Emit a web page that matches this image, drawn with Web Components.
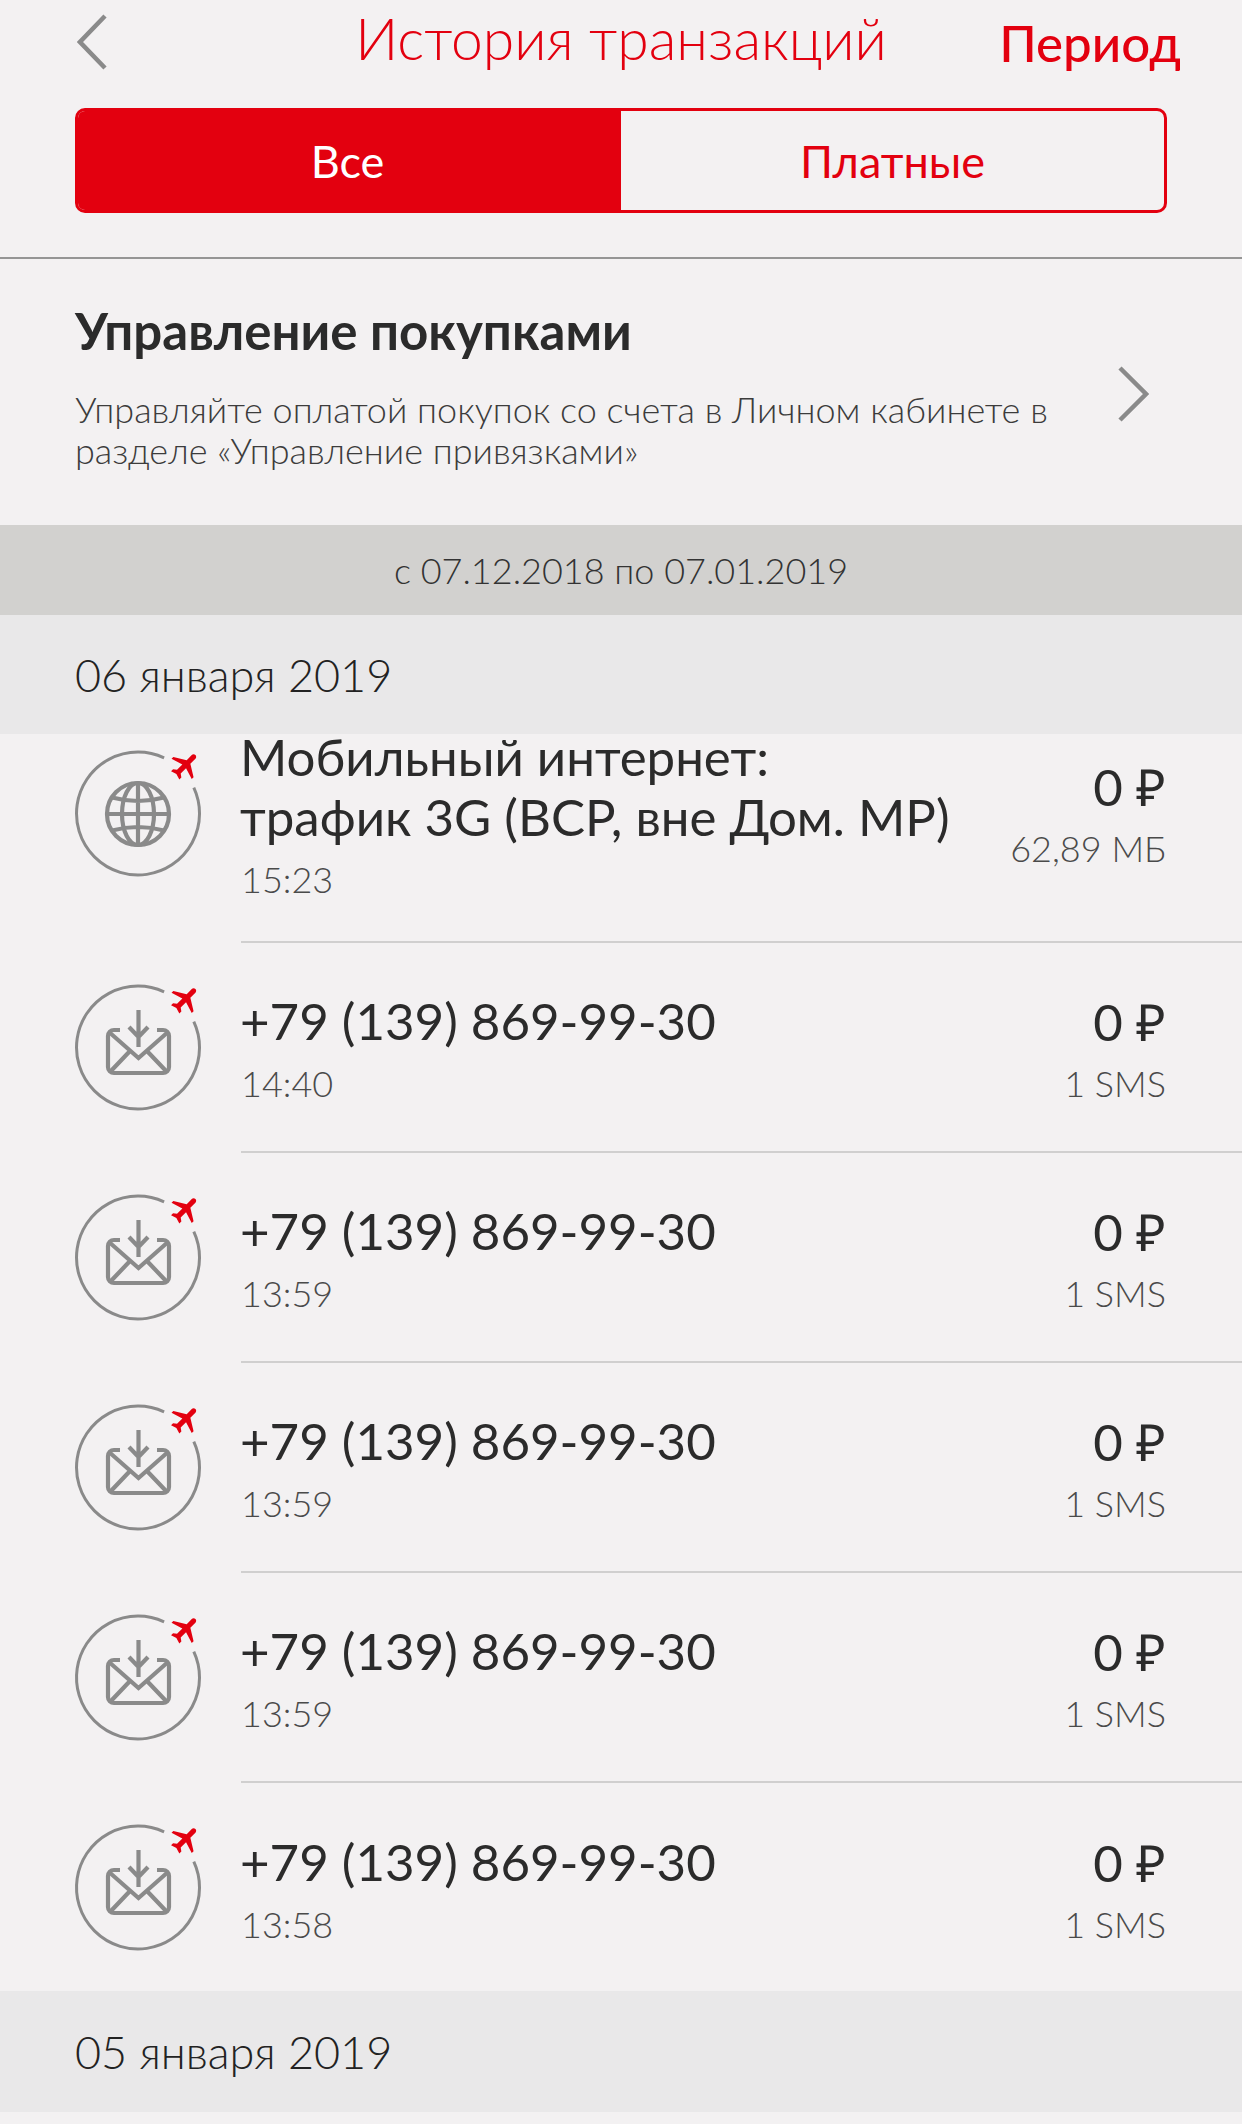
<!DOCTYPE html>
<html lang="ru"><head><meta charset="utf-8"><style>
html,body{margin:0;background:#f3f1f2}
body{width:1242px;height:2124px;overflow:hidden;font-family:Lato,"Open Sans","Noto Sans",sans-serif;color:#2b2b2b}
</style></head><body>
<tx-header></tx-header>
<tx-promo></tx-promo>
<tx-period>с 07.12.2018 по 07.01.2019</tx-period>
<tx-date>06 января 2019</tx-date>
<tx-list>
<tx-row kind="net" class="first" amount="0 ₽" sub="62,89 МБ" time="15:23">Мобильный интернет:<br>трафик 3G (ВСР, вне Дом. МР)</tx-row>
<tx-row amount="0 ₽" sub="1 SMS" time="14:40">+79 (139) 869-99-30</tx-row>
<tx-row amount="0 ₽" sub="1 SMS" time="13:59">+79 (139) 869-99-30</tx-row>
<tx-row amount="0 ₽" sub="1 SMS" time="13:59">+79 (139) 869-99-30</tx-row>
<tx-row amount="0 ₽" sub="1 SMS" time="13:59">+79 (139) 869-99-30</tx-row>
<tx-row amount="0 ₽" sub="1 SMS" time="13:58" last>+79 (139) 869-99-30</tx-row>
</tx-list>
<tx-date class="next">05 января 2019</tx-date>
<script>
function def(name, html, init){
  customElements.define(name, class extends HTMLElement{
    connectedCallback(){
      if(this.shadowRoot) return;
      const r=this.attachShadow({mode:'open'});
      r.innerHTML=html;
      if(init) init(this,r);
    }
  });
}
def('tx-header',`<style>
:host{display:block;height:257px;border-bottom:2px solid #959595;box-sizing:content-box}
.top{display:flex;align-items:flex-start;height:108px;position:relative;padding:0 75px}
.back{margin:14px 0 0 2px;display:block}
h1{position:absolute;left:0;right:0;top:3px;margin:0;text-align:center;font:300 57px/70px Lato,sans-serif;color:#e3000f}
.per{position:absolute;right:61px;top:8px;font:500 51px/70px Lato,sans-serif;color:#e3000f}
.seg{display:flex;margin:0 75px;height:105px;border-radius:10px;border:3px solid #e3000f;box-sizing:border-box;overflow:hidden}
.seg div{flex:1;display:flex;align-items:center;justify-content:center;font:400 45px Lato,sans-serif;color:#e3000f}
.seg .on{background:#e3000f;color:#fff}
.seg .on span{margin-right:4px}
</style>
<div class="top">
<svg class="back" width="32" height="56" viewBox="0 0 32 56"><path d="M28 2 3 28l25 26" fill="none" stroke="#8a8a8a" stroke-width="4.5"/></svg>
<h1>История транзакций</h1><span class="per">Период</span></div>
<div class="seg"><div class="on"><span>Все</span></div><div>Платные</div></div>`);
def('tx-promo',`<style>
:host{display:flex;align-items:center;height:266px;box-sizing:border-box;padding:0 93px 12px 75px}
.t{flex:1}
h2{margin:0 0 28px;font:700 51px/60px Lato,sans-serif;color:#2b2b2b}
p{margin:0;font:300 36px/41px Lato,sans-serif;color:#3c3c3c;white-space:nowrap}
svg{display:block;margin-top:16px}
</style>
<div class="t"><h2>Управление покупками</h2><p>Управляйте оплатой покупок со счета в Личном кабинете в<br>разделе «Управление привязками»</p></div>
<svg width="32" height="56" viewBox="0 0 32 56"><path d="M3 2l26 26L3 54" fill="none" stroke="#8a8a8a" stroke-width="4.5"/></svg>`);
def('tx-period',`<style>
:host{display:flex;align-items:center;justify-content:center;height:90px;background:#d2d1cf;font:300 36px Lato,sans-serif;color:#333}
</style><slot></slot>`);
def('tx-date',`<style>
:host{display:flex;align-items:center;height:119px;padding-left:75px;background:#e9e8e9;font:300 45px Lato,sans-serif;color:#222}
:host(.next){height:121px}
</style><slot></slot>`);
def('tx-list',`<style>:host{display:flow-root;height:1257px}</style><slot></slot>`);
const plane=`<g transform="translate(110.300 14.200) rotate(45) scale(1.300) translate(-12 -12)"><path fill="#e3000f" d="M23 16v-2l-9-5.500V3c0-1.100-.9-2-2-2s-2 .9-2 2v5.500L1 14v2l9-2.800V19l-2.500 1.800V23l4.500-1.300 4.500 1.300v-2.200L14 19v-5.800z"/></g>`;
const ring=`<path d="M89.100 6.800A61.500 61.500 0 1 0 118.800 36.600" fill="none" stroke="#8a8a8a" stroke-width="3"/>`;
const mail=`<g fill="none" stroke="#8a8a8a" stroke-width="4.200"><path d="M45 45h-6a6 6 0 0 0-6 6v31a6 6 0 0 0 6 6h49a6 6 0 0 0 6-6V51a6 6 0 0 0-6-6h-6"/><path d="M34 47l29.500 26L93 47M35 87l20-21M92 87L72 66"/><path d="M63.500 25v37M54 42l9.500 10L73 42"/></g>`;
const globe=`<g fill="none" stroke="#8a8a8a" stroke-width="4.200" transform="translate(0,.5)"><circle cx="63" cy="62.500" r="31"/><ellipse cx="63" cy="62.500" rx="16" ry="31"/><path d="M63 31.500v62M32 62.500h62M37 46q26 7 52 0M37 79q26-7 52 0"/></g>`;
def('tx-row',`<style>
:host{display:flex;align-items:center;height:210px;box-sizing:border-box;padding-left:75px}
:host(.first){height:259px;margin-top:-50px}
svg{flex:none;display:block;overflow:visible;margin-right:40px}
.b{flex:1;align-self:stretch;display:flex;align-items:center;justify-content:space-between;border-bottom:2px solid #d0cfcf;padding-right:76px}
:host([last]) .b{border-bottom:0}
.title{font:400 51px/60px Lato,sans-serif;color:#2b2b2b;white-space:nowrap;margin-left:-1px}
.time,.sub{font:300 36px/40px Lato,sans-serif;color:#4a4a4a;margin-top:12px}
.r{text-align:right;flex:none}
.amt{font:400 51px/60px Lato,sans-serif;color:#2b2b2b}
.sub{margin-top:11px}
</style>
<svg width="126" height="126" viewBox="0 0 126 126"></svg>
<div class="b"><div class="l"><div class="title"><slot></slot></div><div class="time"></div></div><div class="r"><div class="amt"></div><div class="sub"></div></div></div>`,
(h,r)=>{
  r.querySelector('svg').innerHTML=ring+plane+(h.getAttribute('kind')==='net'?globe:mail);
  r.querySelector('.time').textContent=h.getAttribute('time');
  r.querySelector('.amt').textContent=h.getAttribute('amount');
  r.querySelector('.sub').textContent=h.getAttribute('sub');
});
</script>
</body></html>
